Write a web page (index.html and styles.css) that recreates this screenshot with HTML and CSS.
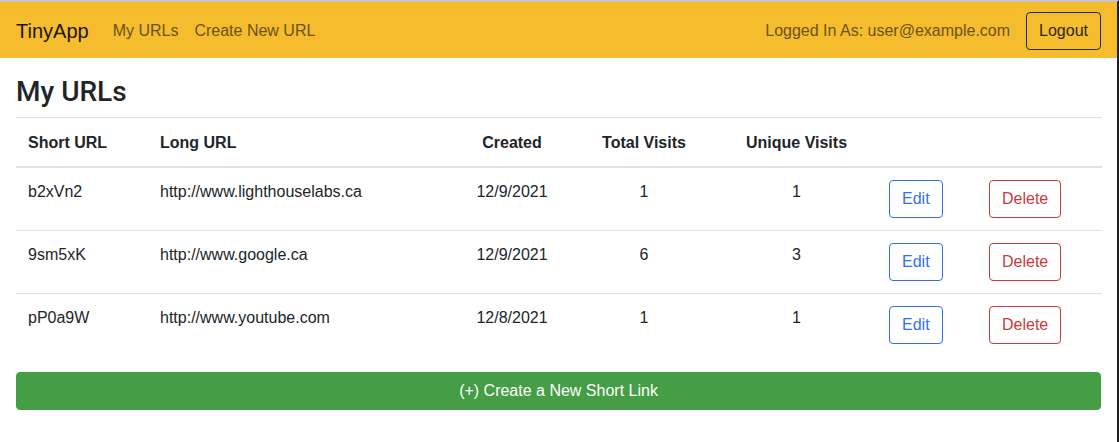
FILE: index.html
```html
<!DOCTYPE html>
<html lang="en">
<head>
<meta charset="utf-8">
<title>TinyApp - My URLs</title>
<link rel="stylesheet" href="styles.css">
</head>
<body>
<nav class="navbar">
  <a class="brand" href="#">TinyApp</a>
  <ul class="nav">
    <li><a class="nav-link" href="#">My URLs</a></li>
    <li><a class="nav-link" href="#">Create New URL</a></li>
  </ul>
  <div class="nav-right">
    <span class="user">Logged In As: user@example.com</span>
    <button class="btn btn-outline-dark">Logout</button>
  </div>
</nav>
<main class="container">
  <h3 class="title">My URLs</h3>
  <table class="table">
    <colgroup>
      <col class="c-short"><col class="c-long"><col class="c-created"><col class="c-total"><col class="c-unique"><col class="c-edit"><col class="c-del">
    </colgroup>
    <thead>
      <tr>
        <th>Short URL</th>
        <th>Long URL</th>
        <th class="center">Created</th>
        <th class="center">Total Visits</th>
        <th class="center">Unique Visits</th>
        <th></th>
        <th></th>
      </tr>
    </thead>
    <tbody>
      <tr>
        <td>b2xVn2</td>
        <td>http://www.lighthouselabs.ca</td>
        <td class="center">12/9/2021</td>
        <td class="center">1</td>
        <td class="center">1</td>
        <td><button class="btn btn-outline-primary">Edit</button></td>
        <td><button class="btn btn-outline-danger">Delete</button></td>
      </tr>
      <tr>
        <td>9sm5xK</td>
        <td>http://www.google.ca</td>
        <td class="center">12/9/2021</td>
        <td class="center">6</td>
        <td class="center">3</td>
        <td><button class="btn btn-outline-primary">Edit</button></td>
        <td><button class="btn btn-outline-danger">Delete</button></td>
      </tr>
      <tr>
        <td>pP0a9W</td>
        <td>http://www.youtube.com</td>
        <td class="center">12/8/2021</td>
        <td class="center">1</td>
        <td class="center">1</td>
        <td><button class="btn btn-outline-primary">Edit</button></td>
        <td><button class="btn btn-outline-danger">Delete</button></td>
      </tr>
    </tbody>
  </table>
  <button class="btn btn-success btn-block">(+) Create a New Short Link</button>
</main>
</body>
</html>
```

FILE: styles.css
```css
* { box-sizing: border-box; }
html {
  min-height: 100vh;
  border-top: 2px solid #c6c6c6;
  border-right: 2px solid #1e1e1e;
  background: #fff;
}
body {
  margin: 0;
  font-family: "Liberation Sans", Arial, sans-serif;
  font-size: 16px;
  line-height: 24px;
  color: #212529;
}
.navbar {
  display: flex;
  align-items: center;
  height: 56px;
  padding: 9px 16px 7px;
  background: #f5bd2e;
}
.brand {
  font-size: 20px;
  line-height: 30px;
  padding: 5px 0;
  margin-right: 16px;
  color: #1a1608;
  text-decoration: none;
}
.nav {
  display: flex;
  list-style: none;
  margin: 0;
  padding: 0;
}
.nav-link {
  display: block;
  padding: 8px;
  color: #6b5218;
  text-decoration: none;
}
.nav-right {
  margin-left: auto;
  display: flex;
  align-items: center;
  gap: 16px;
}
.user { color: #6b5218; }
.btn {
  font-family: inherit;
  font-size: 16px;
  line-height: 24px;
  padding: 6px 12px;
  border: 1px solid transparent;
  border-radius: 4px;
  background: transparent;
  cursor: pointer;
}
.navbar .btn { margin-top: -1px; }
.btn-outline-dark { border-color: #2e2a22; color: #2a2518; }
.btn-outline-primary { border-color: #2f72ea; color: #2f72ea; }
.btn-outline-danger { border-color: #c9393f; color: #c9393f; }
.btn-success {
  background: #459d45;
  border-color: #459d45;
  color: #fff;
}
.btn-block { display: block; width: 100%; }
.container { padding: 17px 16px 0; }
.title {
  font-family: Roboto, "Liberation Sans", sans-serif;
  font-weight: 500;
  font-size: 28px;
  line-height: 34px;
  margin: 0 0 8px;
}
.table {
  width: 100%;
  border-collapse: collapse;
  table-layout: fixed;
  margin-bottom: 16px;
}
.c-short { width: 132px; }
.c-long { width: 304px; }
.c-created { width: 120px; }
.c-total { width: 144px; }
.c-unique { width: 161px; }
.c-edit { width: 100px; }
.c-del { width: 125px; }
.table th, .table td {
  padding: 12px;
  text-align: left;
  vertical-align: top;
  border-top: 1px solid #dee2e6;
  white-space: nowrap;
}
.table th { font-weight: 700; padding-top: 13px; padding-bottom: 11px; }
.table thead th { border-bottom: 2px solid #dee2e6; }
.table tbody tr:first-child td { border-top: 2px solid #dee2e6; }
.table .center { text-align: center; }
```
